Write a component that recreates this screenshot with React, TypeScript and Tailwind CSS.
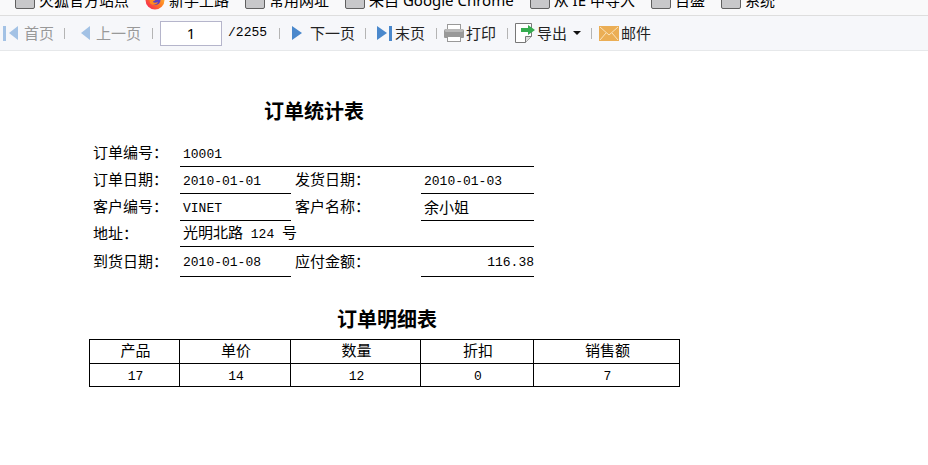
import type { ReactNode } from "react";

const bookmarks = [
  { name: "火狐官方站点", icon: "folder" },
  { name: "新手上路", icon: "firefox" },
  { name: "常用网址", icon: "folder" },
  { name: "来自 Google Chrome", icon: "folder" },
  { name: "从 IE 中导入", icon: "folder" },
  { name: "百盛", icon: "folder" },
  { name: "系统", icon: "folder" },
];

const detailHeads = ["产品", "单价", "数量", "折扣", "销售额"];
const detailRows = [["17", "14", "12", "0", "7"]];

const FirefoxIcon = () => (
  <svg className="h-5 w-5 shrink-0" viewBox="0 0 20 20">
    <defs>
      <linearGradient id="fox" x1="1" y1="0" x2="0" y2="1">
        <stop offset="0" stopColor="#ffd43a" />
        <stop offset="0.5" stopColor="#ff7a22" />
        <stop offset="1" stopColor="#f5155f" />
      </linearGradient>
    </defs>
    <circle cx="10" cy="10" r="9.5" fill="url(#fox)" />
    <circle cx="10.5" cy="10" r="5" fill="#5b3fc4" />
    <path d="M4 7c3 0 4 1 7 2-1 2-3 2-3 3 1 1 3 1 5 0-1 3-6 4-8 1z" fill="#ff8a1e" />
  </svg>
);

const FolderIcon = () => (
  <span className="h-[18px] w-5 shrink-0 rounded-[2px] border border-[#606060] bg-[#c8c8ca]" />
);

const Arrow = ({ back, bar, color }: { back?: boolean; bar?: boolean; color: string }) => (
  <svg className="h-4 w-4 shrink-0" viewBox="0 0 16 16" fill={color}>
    {back ? <path d="M15 1v14L6 8z" /> : <path d="M1 1v14l10-7z" />}
    {bar && <rect x={back ? 0 : 13} y="1" width="3" height="15" />}
  </svg>
);

const PrintIcon = () => (
  <svg className="h-5 w-5 shrink-0" viewBox="0 0 20 20">
    <rect x="3.5" y="1.5" width="13" height="7" fill="#fff" stroke="#999" />
    <path d="M2 6h16a2 2 0 0 1 2 2v6a1 1 0 0 1-1 1H1a1 1 0 0 1-1-1V8a2 2 0 0 1 2-2z" fill="#999" />
    <rect x="1" y="6" width="18" height="3" rx="1" fill="#b8b8b8" />
    <rect x="3.5" y="13.5" width="13" height="5" fill="#fff" stroke="#999" />
  </svg>
);

const ExportIcon = () => (
  <svg className="h-5 w-5 shrink-0" viewBox="0 0 20 20">
    <path d="M.5.5h16v13l-6 6H.5z" fill="#fff" stroke="#777" />
    <path d="M10.5 19.5v-6h6" fill="#ddd" stroke="#777" />
    <path d="M6 5h7V2l7 5-7 5V9H6z" fill="#35ac4f" />
  </svg>
);

const MailIcon = () => (
  <svg className="h-[15px] w-5 shrink-0" viewBox="0 0 20 15">
    <rect width="20" height="15" fill="#ebae55" />
    <path d="M1 1l9 8 9-8M1 14l6-7M19 14l-6-7" fill="none" stroke="#fbe3bb" />
  </svg>
);

const Divider = ({ className }: { className?: string }) => (
  <span className={`h-[11px] w-px shrink-0 bg-[#b4b4b4] ${className ?? ""}`} />
);

const ToolButton = ({ children, disabled }: { children: ReactNode; disabled?: boolean }) => (
  <button
    type="button"
    disabled={disabled}
    className="flex shrink-0 items-center whitespace-nowrap text-[#222] disabled:text-[#999]"
  >
    {children}
  </button>
);

const Num = ({ children }: { children: ReactNode }) => (
  <span className="font-['Liberation_Mono',monospace] text-[13px]">{children}</span>
);

const Label = ({ children }: { children: ReactNode }) => (
  <th scope="row" className="pb-[3px] pl-1 text-left font-normal">
    {children}
  </th>
);

const Value = ({ children, colSpan, right }: { children: ReactNode; colSpan?: number; right?: boolean }) => (
  <td colSpan={colSpan} className={`border-b border-black ${right ? "text-right" : "pl-[3px]"}`}>
    {children}
  </td>
);

export default function App() {
  return (
    <div className="min-h-screen overflow-hidden bg-white font-['Noto_Sans_CJK_SC',sans-serif] text-[15px] leading-5 text-black">
      {/* Bookmarks bar, scrolled half out of view */}
      <nav className="flex h-4 items-end overflow-hidden border-b border-[#dedede] bg-[#f9f9fa] font-['Noto_Sans','Noto_Sans_CJK_SC',sans-serif]">
        <div className="flex h-[30px] shrink-0 items-center gap-4 pl-[15px]">
          {bookmarks.map((item) => (
            <a key={item.name} href="#" className="flex items-center gap-1 whitespace-nowrap">
              {item.icon === "firefox" ? <FirefoxIcon /> : <FolderIcon />}
              {item.name}
            </a>
          ))}
        </div>
      </nav>

      {/* Report toolbar */}
      <div className="flex h-[35px] items-center border-b border-[#e6e8ea] bg-[#f6f7fa] pl-[3px]">
        <ToolButton disabled>
          <Arrow back bar color="#a3c2e5" />
          <span className="ml-[5px]">首页</span>
        </ToolButton>
        <Divider className="mx-[10px]" />
        <ToolButton disabled>
          <Arrow back color="#a3c2e5" />
          <span className="ml-[5px]">上一页</span>
        </ToolButton>
        <Divider className="ml-[11px] mr-[7px]" />
        <input
          aria-label="页码"
          defaultValue="1"
          className="h-[25px] w-[62px] shrink-0 border border-[#b5b5cb] bg-white text-center font-['Noto_Sans',sans-serif]"
        />
        <span className="ml-[6px] flex w-[40px] shrink-0 items-center">
          <Num>/2255</Num>
        </span>
        <Divider className="ml-[11px] mr-[11px]" />
        <ToolButton>
          <Arrow color="#4a88cc" />
          <span className="ml-[3px]">下一页</span>
        </ToolButton>
        <Divider className="mx-[10px]" />
        <ToolButton>
          <Arrow bar color="#4a88cc" />
          <span className="ml-[3px]">末页</span>
        </ToolButton>
        <Divider className="ml-[11px] mr-[7px]" />
        <ToolButton>
          <PrintIcon />
          <span className="ml-[2px]">打印</span>
        </ToolButton>
        <Divider className="ml-[11px] mr-[7px]" />
        <ToolButton>
          <ExportIcon />
          <span className="ml-[2px]">导出</span>
          <svg className="ml-[6px] h-1 w-2" viewBox="0 0 8 4">
            <path d="M0 0h8L4 4z" fill="#111" />
          </svg>
        </ToolButton>
        <Divider className="ml-[10px] mr-[7px]" />
        <ToolButton>
          <MailIcon />
          <span className="ml-[2px]">邮件</span>
        </ToolButton>
      </div>

      <main className="pl-[89px] pt-12">
        <h1 className="w-[450px] text-center text-xl leading-6 font-bold">订单统计表</h1>

        <table className="mt-[17px] w-[445px] table-fixed border-separate border-spacing-0">
          <colgroup>
            <col className="w-[91px]" />
            <col className="w-[111px]" />
            <col className="w-[130px]" />
            <col className="w-[113px]" />
          </colgroup>
          <tbody>
            <tr className="h-[27px]">
              <Label>订单编号：</Label>
              <Value colSpan={3}><Num>10001</Num></Value>
            </tr>
            <tr className="h-[27px]">
              <Label>订单日期：</Label>
              <Value><Num>2010-01-01</Num></Value>
              <Label>发货日期：</Label>
              <Value><Num>2010-01-03</Num></Value>
            </tr>
            <tr className="h-[27px]">
              <Label>客户编号：</Label>
              <Value><Num>VINET</Num></Value>
              <Label>客户名称：</Label>
              <Value>余小姐</Value>
            </tr>
            <tr className="h-[26px]">
              <Label>地址：</Label>
              <Value colSpan={3}>光明北路<Num> 124 </Num>号</Value>
            </tr>
            <tr className="h-[30px]">
              <Label>到货日期：</Label>
              <Value><Num>2010-01-08</Num></Value>
              <Label>应付金额：</Label>
              <Value right><Num>116.38</Num></Value>
            </tr>
          </tbody>
        </table>

        <h2 className="mt-[30px] w-[596px] text-center text-xl leading-6 font-bold">订单明细表</h2>

        <table className="mt-2 w-[591px] table-fixed border-collapse text-center leading-4">
          <colgroup>
            <col className="w-[90px]" />
            <col className="w-[111px]" />
            <col className="w-[130px]" />
            <col className="w-[113px]" />
            <col className="w-[146px]" />
          </colgroup>
          <thead>
            <tr className="h-6">
              {detailHeads.map((head) => (
                <th key={head} scope="col" className="border border-black pb-[3px] pl-[2px] font-normal">{head}</th>
              ))}
            </tr>
          </thead>
          <tbody>
            {detailRows.map((row, index) => (
              <tr key={index} className="h-[23px]">
                {row.map((cell, i) => (
                  <td key={i} className="border border-black pl-[2px]"><Num>{cell}</Num></td>
                ))}
              </tr>
            ))}
          </tbody>
        </table>
      </main>
    </div>
  );
}
